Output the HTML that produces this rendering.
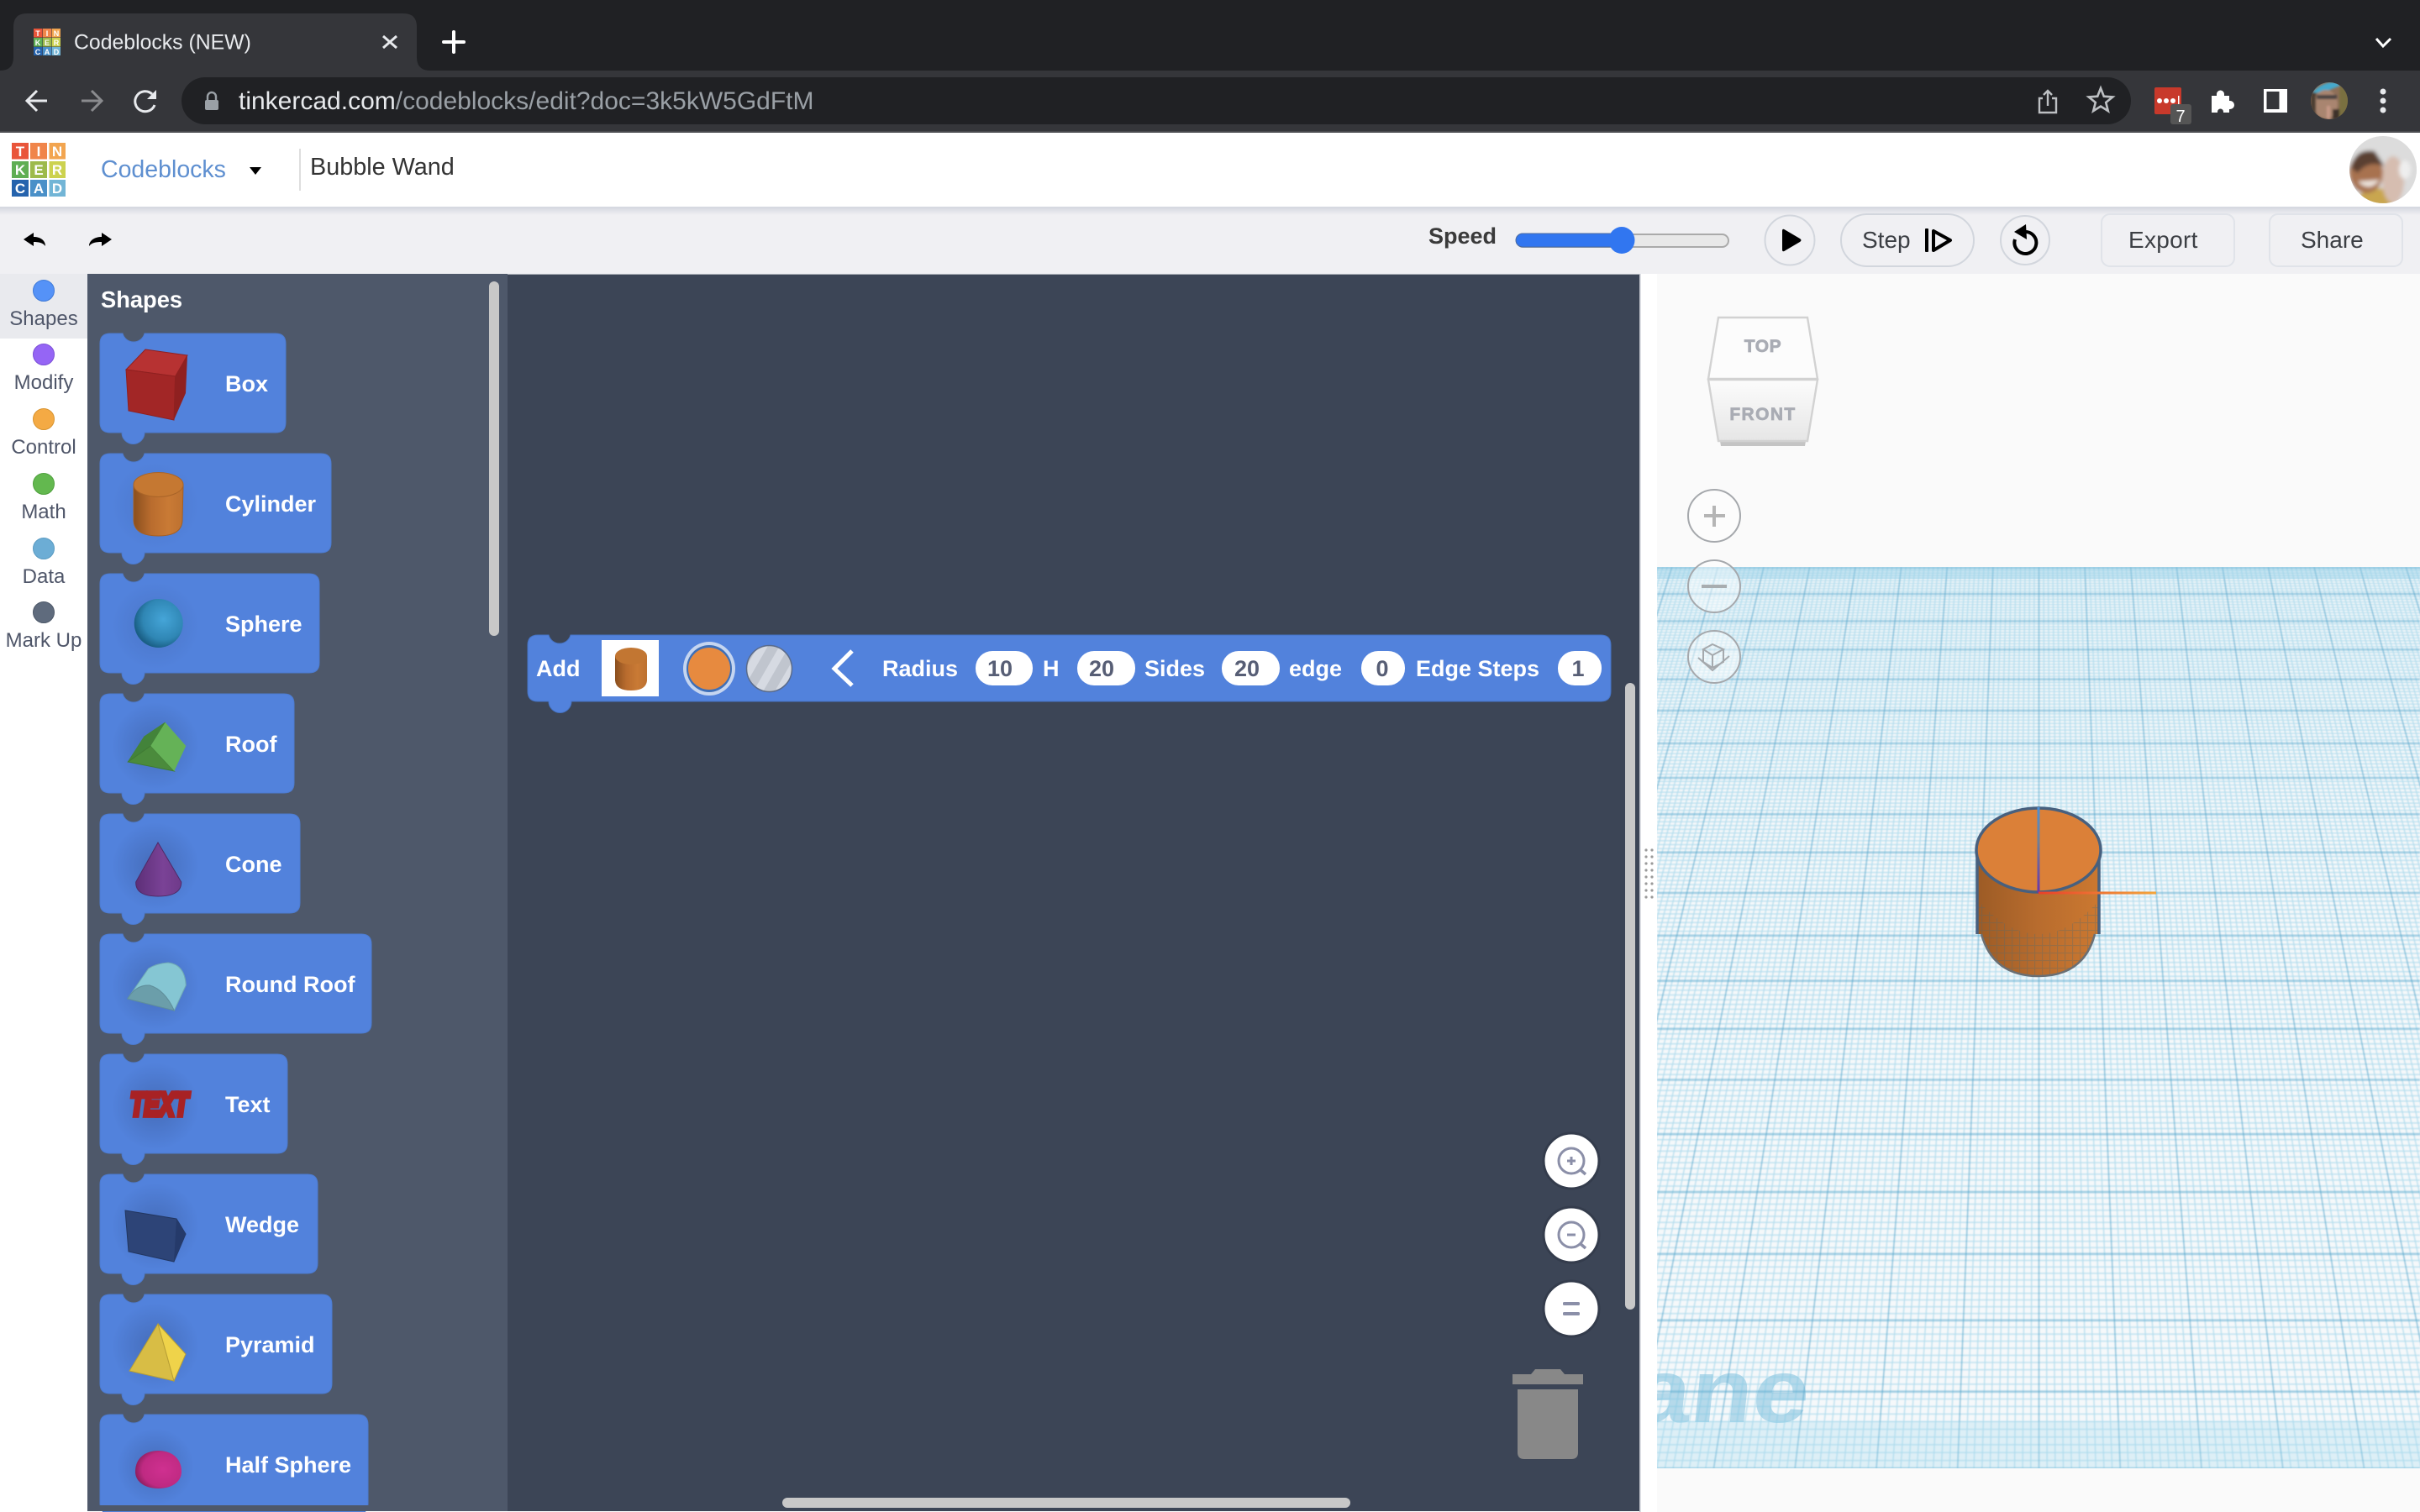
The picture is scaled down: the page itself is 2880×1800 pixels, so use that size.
<!DOCTYPE html>
<html><head><meta charset="utf-8"><title>Codeblocks (NEW)</title>
<style>
html,body{margin:0;padding:0;width:2880px;height:1800px;overflow:hidden;background:#fff}
svg{display:block;position:absolute;left:0;top:0}
text{font-family:"Liberation Sans",sans-serif}
.b{font-weight:bold;font-size:27px;fill:#fff}
.side{font-size:24px;fill:#4f5669;text-anchor:middle}
.n{font-weight:bold;font-size:27px;fill:#575e75;text-anchor:middle}
.lg{font-weight:bold;font-size:17px;fill:#fff;text-anchor:middle}
.fv{font-weight:bold;font-size:9px;fill:#fff;text-anchor:middle}
.tb{font-size:28px;fill:#3c3f44}
</style></head><body>
<svg width="2880" height="1800" viewBox="0 0 2880 1800" xmlns="http://www.w3.org/2000/svg">
<defs>
<linearGradient id="hs" x1="0" y1="0" x2="0" y2="1"><stop offset="0" stop-color="#d3d6df"/><stop offset="1" stop-color="#f0f0f3"/></linearGradient>
<linearGradient id="cyl" x1="0" y1="0" x2="1" y2="0"><stop offset="0" stop-color="#8a4f1e"/><stop offset=".35" stop-color="#b96c2e"/><stop offset=".7" stop-color="#c97a35"/><stop offset="1" stop-color="#bd7130"/></linearGradient>
<linearGradient id="body" x1="0" y1="0" x2="1" y2="0"><stop offset="0" stop-color="#9c5b25"/><stop offset=".5" stop-color="#b86c2e"/><stop offset="1" stop-color="#cb7830"/></linearGradient>
<radialGradient id="sph" cx=".6" cy=".42" r=".6"><stop offset="0" stop-color="#45a5d8"/><stop offset=".7" stop-color="#2f86b4"/><stop offset="1" stop-color="#1a5f85"/></radialGradient>
<radialGradient id="hsp" cx=".6" cy=".5" r=".6"><stop offset="0" stop-color="#cf3090"/><stop offset=".75" stop-color="#bf2a82"/><stop offset="1" stop-color="#8e1f60"/></radialGradient>
<linearGradient id="con" x1="0" y1="0" x2="1" y2="0"><stop offset="0" stop-color="#5d2f78"/><stop offset=".6" stop-color="#7a4296"/><stop offset="1" stop-color="#6f3a8a"/></linearGradient>
<radialGradient id="glow"><stop offset="0" stop-color="#3a5a9c" stop-opacity=".55"/><stop offset="1" stop-color="#3a5a9c" stop-opacity="0"/></radialGradient>
<linearGradient id="fr" x1="0" y1="0" x2="0" y2="1"><stop offset="0" stop-color="#fcfcfc"/><stop offset="1" stop-color="#e6e6e6"/></linearGradient>
<linearGradient id="ax" x1="0" y1="0" x2="0" y2="1"><stop offset="0" stop-color="#4a90d8"/><stop offset=".4" stop-color="#6f7f96"/><stop offset="1" stop-color="#6a35a8"/></linearGradient>
<linearGradient id="ax2" x1="0" y1="0" x2="1" y2="0"><stop offset="0" stop-color="#e8402a"/><stop offset="1" stop-color="#f4a63c"/></linearGradient>
<pattern id="st" width="22" height="22" patternUnits="userSpaceOnUse" patternTransform="rotate(30)"><rect width="22" height="22" fill="#c0c5ce"/><rect width="10" height="22" fill="#d6dae2"/></pattern>
<pattern id="gt" width="9" height="9" patternUnits="userSpaceOnUse"><path d="M0 .5H9M.5 0V9" stroke="#4d6a70" stroke-opacity=".32" stroke-width="1.2" fill="none"/></pattern>
<clipPath id="gc"><rect x="1972" y="675" width="908" height="1073"/></clipPath>
<clipPath id="av1"><ellipse cx="2772" cy="120" rx="22" ry="22"/></clipPath>
<clipPath id="av2"><ellipse cx="2836" cy="202" rx="40" ry="40"/></clipPath>
<filter id="bl"><feGaussianBlur stdDeviation="2.5"/></filter>
<filter id="bs"><feGaussianBlur stdDeviation="1.2"/></filter>
<filter id="gb"><feGaussianBlur stdDeviation=".7"/></filter>
<filter id="sb"><feGaussianBlur stdDeviation=".5"/></filter>
</defs>

<!-- browser chrome -->
<rect width="2880" height="84" fill="#202124"/>
<rect y="84" width="2880" height="72" fill="#35363a"/>
<rect y="156" width="2880" height="2" fill="#4a4b4f"/>
<path d="M0 84Q16 84 16 68V32Q16 16 32 16H480Q496 16 496 32V68Q496 84 512 84Z" fill="#35363a"/>
<g>
<rect x="40" y="34" width="10.5" height="10.5" fill="#e9553a"/><rect x="51" y="34" width="10.5" height="10.5" fill="#f0854a"/><rect x="62" y="34" width="10" height="10.5" fill="#f2a550"/>
<rect x="40" y="45" width="10.5" height="10.5" fill="#5fae54"/><rect x="51" y="45" width="10.5" height="10.5" fill="#9dba4b"/><rect x="62" y="45" width="10" height="10.5" fill="#ccd24f"/>
<rect x="40" y="56" width="10.5" height="10" fill="#2563ad"/><rect x="51" y="56" width="10.5" height="10" fill="#4a90c8"/><rect x="62" y="56" width="10" height="10" fill="#72b5d6"/>
<text class="fv" x="45" y="43">T</text><text class="fv" x="56" y="43">I</text><text class="fv" x="67" y="43">N</text>
<text class="fv" x="45" y="54">K</text><text class="fv" x="56" y="54">E</text><text class="fv" x="67" y="54">R</text>
<text class="fv" x="45" y="65">C</text><text class="fv" x="56" y="65">A</text><text class="fv" x="67" y="65">D</text>
</g>
<text x="88" y="58.5" font-size="24.8" fill="#e8eaed">Codeblocks (NEW)</text>
<path d="M456 43L472 57M472 43L456 57" stroke="#e8eaed" stroke-width="3" fill="none"/>
<path d="M540 38V62M528 50H552" stroke="#fff" stroke-width="4" fill="none" stroke-linecap="round"/>
<path d="M2828 46L2836 55L2845 46" stroke="#fff" stroke-width="3" fill="none"/>
<path d="M56 120H33M44 108L32 120L44 132" stroke="#e8eaed" stroke-width="3" fill="none"/>
<path d="M120 120H97M109 108L121 120L109 132" stroke="#8a8b8e" stroke-width="3" fill="none"/>
<path d="M184 125A12 12 0 1 1 181 112" stroke="#e8eaed" stroke-width="3" fill="none"/><path d="M186 107V118H175Z" fill="#e8eaed"/>
<rect x="216" y="92" width="2320" height="56" rx="28" fill="#202124"/>
<rect x="244" y="119" width="16" height="12" rx="2" fill="#9aa0a6"/><path d="M247 119V115A5 5 0 0 1 257 115V119" stroke="#9aa0a6" stroke-width="2.4" fill="none"/>
<text x="284" y="130" font-size="30" fill="#e8eaed">tinkercad.com<tspan fill="#9aa0a6">/codeblocks/edit?doc=3k5kW5GdFtM</tspan></text>
<path d="M2431 117H2427V134H2447V117H2442M2437 126V108M2432 113L2437 108L2442 113" stroke="#bdc0c3" stroke-width="2.4" fill="none"/>
<path d="M2500 105L2503.8 114.7L2514.3 115.4L2506.2 122L2508.8 132.1L2500 126.5L2491.2 132.1L2493.8 122L2485.7 115.4L2496.2 114.7Z" stroke="#bdc0c3" stroke-width="2.6" fill="none"/>
<rect x="2564" y="104" width="32" height="32" rx="2" fill="#c8392b"/>
<circle cx="2570" cy="120" r="3" fill="#fff"/><circle cx="2578" cy="120" r="3" fill="#fff"/><circle cx="2586" cy="120" r="3" fill="#fff"/><rect x="2592" y="114" width="1.5" height="12" fill="#fff"/>
<rect x="2583" y="124" width="25" height="24" rx="3" fill="#555"/><text x="2595" y="145" font-size="20" fill="#fff" text-anchor="middle">7</text>
<path transform="translate(-2,0)" d="M2634 114h6v-2a4.5 4.5 0 0 1 9 0v2h6v6h1a5 5 0 0 1 0 10h-1v4h-7v-1a3.5 3.5 0 0 0 -7 0v1h-7Z" fill="#fff"/>
<rect x="2694" y="106" width="28" height="28" fill="#fff"/><rect x="2697.5" y="109" width="15" height="21" fill="#35363a"/>
<g clip-path="url(#av1)"><rect x="2750" y="98" width="44" height="44" fill="#8e6f58"/><g filter="url(#bs)"><path d="M2750 112Q2768 92 2790 100L2770 108Z" fill="#45a9cc"/><rect x="2784" y="100" width="12" height="44" fill="#7a7040"/><ellipse cx="2768" cy="124" rx="14" ry="17" fill="#a98570"/><rect x="2757" y="113" width="24" height="5" fill="#4a4242"/><rect x="2750" y="110" width="6" height="32" fill="#4c3c32"/><rect x="2769" y="126" width="4" height="16" fill="#c89a88"/><rect x="2776" y="130" width="8" height="12" fill="#3c302a"/></g></g>
<circle cx="2836" cy="109" r="3.5" fill="#e8eaed"/><circle cx="2836" cy="120" r="3.5" fill="#e8eaed"/><circle cx="2836" cy="131" r="3.5" fill="#e8eaed"/>

<!-- app header -->
<rect y="158" width="2880" height="88" fill="#fff"/>
<g>
<rect x="14" y="170" width="20" height="19.5" fill="#e9553a"/><rect x="36" y="170" width="20" height="19.5" fill="#f0854a"/><rect x="58.5" y="170" width="19.5" height="19.5" fill="#f2a550"/>
<rect x="14" y="192" width="20" height="20" fill="#5fae54"/><rect x="36" y="192" width="20" height="20" fill="#9dba4b"/><rect x="58.5" y="192" width="19.5" height="20" fill="#ccd24f"/>
<rect x="14" y="214" width="20" height="20" fill="#2563ad"/><rect x="36" y="214" width="20" height="20" fill="#4a90c8"/><rect x="58.5" y="214" width="19.5" height="20" fill="#72b5d6"/>
<text class="lg" x="24" y="186">T</text><text class="lg" x="46" y="186">I</text><text class="lg" x="68" y="186">N</text>
<text class="lg" x="24" y="208">K</text><text class="lg" x="46" y="208">E</text><text class="lg" x="68" y="208">R</text>
<text class="lg" x="24" y="230">C</text><text class="lg" x="46" y="230">A</text><text class="lg" x="68" y="230">D</text>
</g>
<text x="120" y="211" font-size="28.5" fill="#5e8fd0">Codeblocks</text>
<path d="M297 199H311L304 208Z" fill="#000"/>
<rect x="356" y="177" width="2" height="50" fill="#dedede"/>
<text x="369" y="208" font-size="28.8" fill="#333">Bubble Wand</text>
<ellipse cx="2836" cy="202" rx="40" ry="40" fill="#dcdcdc"/>
<g clip-path="url(#av2)"><g filter="url(#bl)"><rect x="2796" y="162" width="80" height="80" fill="#dcdcdc"/><path d="M2800 242Q2815 218 2842 226L2850 245H2800Z" fill="#c9a650"/><ellipse cx="2816" cy="206" rx="20" ry="24" fill="#a8724f"/><path d="M2798 200Q2803 176 2826 180L2838 198Q2818 190 2806 206Z" fill="#5a4030"/><path d="M2806 216Q2820 230 2832 214" fill="#ece2da"/><ellipse cx="2848" cy="214" rx="13" ry="28" fill="#d6bdb0"/><ellipse cx="2862" cy="202" rx="7" ry="11" fill="#eee"/></g></g>

<!-- toolbar -->
<rect y="246" width="2880" height="80" fill="#f0f0f3"/>
<rect y="246" width="2880" height="10" fill="url(#hs)"/>
<path d="M28 285L40 277V282C48 282 54 286 54 293C51 289 46 288 40 288V293Z" fill="#000"/>
<path d="M133 285L121 277V282C113 282 106 286 106 293C109 289 114 288 121 288V293Z" fill="#000"/>
<text x="1700" y="290" font-size="27" font-weight="bold" fill="#3a3a3a">Speed</text>
<rect x="1805" y="279" width="252" height="15" rx="7.5" fill="#e8e8e8" stroke="#aaa" stroke-width="2"/>
<rect x="1804" y="278" width="127" height="16" rx="8" fill="#3176f0" stroke="#4a6a9f" stroke-width="1"/>
<ellipse cx="1930" cy="286" rx="15.5" ry="16" fill="#3176f0"/>
<circle cx="2130" cy="286" r="29.5" fill="none" stroke="#d2d6dd" stroke-width="2"/>
<path d="M2121 275Q2121 271 2125 274L2142 284Q2145 286 2142 288L2125 298Q2121 301 2121 297Z" fill="#000"/>
<rect x="2191" y="255" width="158" height="62" rx="31" fill="none" stroke="#d2d6dd" stroke-width="2"/>
<text class="tb" x="2216" y="295">Step</text>
<rect x="2291" y="272" width="4" height="28" rx="1" fill="#000"/>
<path d="M2301 275V298L2321 286Z" fill="none" stroke="#000" stroke-width="4" stroke-linejoin="round"/>
<circle cx="2410" cy="286" r="29" fill="none" stroke="#d2d6dd" stroke-width="2"/>
<path d="M2411 276A13 13 0 1 1 2398 285" fill="none" stroke="#000" stroke-width="4"/>
<path d="M2411 267L2397 276L2412 285Z" fill="#000"/>
<rect x="2501" y="255" width="158" height="62" rx="10" fill="none" stroke="#e0e3e9" stroke-width="2"/>
<text class="tb" x="2533" y="295" letter-spacing=".3">Export</text>
<rect x="2701" y="255" width="158" height="62" rx="10" fill="none" stroke="#e0e3e9" stroke-width="2"/>
<text class="tb" x="2738" y="295">Share</text>

<!-- sidebar -->
<rect y="326" width="104" height="1474" fill="#fff"/>
<rect y="326" width="104" height="77" fill="#e9eaee"/>
<g stroke-width="1">
<circle cx="52" cy="346" r="12.5" fill="#5592f7" stroke="#3f7ad8"/>
<circle cx="52" cy="422" r="12.5" fill="#9565f5" stroke="#7b4fd6"/>
<circle cx="52" cy="499" r="12.5" fill="#f4aa44" stroke="#d89430"/>
<circle cx="52" cy="576" r="12.5" fill="#63b84f" stroke="#4fa03d"/>
<circle cx="52" cy="653" r="12.5" fill="#6cadd5" stroke="#5a9bc2"/>
<circle cx="52" cy="729" r="12.5" fill="#5f6b7d" stroke="#4c5768"/>
</g>
<text class="side" x="52" y="387">Shapes</text>
<text class="side" x="52" y="463">Modify</text>
<text class="side" x="52" y="540">Control</text>
<text class="side" x="52" y="617">Math</text>
<text class="side" x="52" y="694">Data</text>
<text class="side" x="52" y="770">Mark Up</text>

<!-- drawer -->
<rect x="104" y="326" width="500" height="1473" fill="#4e586a"/>
<text x="120" y="366" font-size="27.3" font-weight="bold" fill="#fff">Shapes</text>
<rect x="582" y="335" width="12" height="422" rx="6" fill="#c8c8c8"/>

<g fill="#5282dc" stroke="#4c7bd0" stroke-width="1">
<path transform="translate(0,397)" d="M131 0H146A13.45 13.45 0 0 0 172 0H328Q340 0 340 12V106Q340 118 328 118H172A13.45 13.45 0 0 1 145 118H131Q119 118 119 106V12Q119 0 131 0Z"/>
<path transform="translate(0,540)" d="M131 0H146A13.45 13.45 0 0 0 172 0H382Q394 0 394 12V106Q394 118 382 118H172A13.45 13.45 0 0 1 145 118H131Q119 118 119 106V12Q119 0 131 0Z"/>
<path transform="translate(0,683)" d="M131 0H146A13.45 13.45 0 0 0 172 0H368Q380 0 380 12V106Q380 118 368 118H172A13.45 13.45 0 0 1 145 118H131Q119 118 119 106V12Q119 0 131 0Z"/>
<path transform="translate(0,826)" d="M131 0H146A13.45 13.45 0 0 0 172 0H338Q350 0 350 12V106Q350 118 338 118H172A13.45 13.45 0 0 1 145 118H131Q119 118 119 106V12Q119 0 131 0Z"/>
<path transform="translate(0,969)" d="M131 0H146A13.45 13.45 0 0 0 172 0H345Q357 0 357 12V106Q357 118 345 118H172A13.45 13.45 0 0 1 145 118H131Q119 118 119 106V12Q119 0 131 0Z"/>
<path transform="translate(0,1112)" d="M131 0H146A13.45 13.45 0 0 0 172 0H430Q442 0 442 12V106Q442 118 430 118H172A13.45 13.45 0 0 1 145 118H131Q119 118 119 106V12Q119 0 131 0Z"/>
<path transform="translate(0,1255)" d="M131 0H146A13.45 13.45 0 0 0 172 0H330Q342 0 342 12V106Q342 118 330 118H172A13.45 13.45 0 0 1 145 118H131Q119 118 119 106V12Q119 0 131 0Z"/>
<path transform="translate(0,1398)" d="M131 0H146A13.45 13.45 0 0 0 172 0H366Q378 0 378 12V106Q378 118 366 118H172A13.45 13.45 0 0 1 145 118H131Q119 118 119 106V12Q119 0 131 0Z"/>
<path transform="translate(0,1541)" d="M131 0H146A13.45 13.45 0 0 0 172 0H383Q395 0 395 12V106Q395 118 383 118H172A13.45 13.45 0 0 1 145 118H131Q119 118 119 106V12Q119 0 131 0Z"/>
<path transform="translate(0,1684)" d="M131 0H146A13.45 13.45 0 0 0 172 0H426Q438 0 438 12V106Q438 118 426 118H172A13.45 13.45 0 0 1 145 118H131Q119 118 119 106V12Q119 0 131 0Z"/>
</g>
<rect x="104" y="1792" width="500" height="7" fill="#4e586a"/>
<g>
<circle cx="185" cy="602" r="52" fill="url(#glow)" opacity=".5"/><circle cx="185" cy="745" r="52" fill="url(#glow)" opacity=".6"/>
<circle cx="185" cy="888" r="52" fill="url(#glow)"/><circle cx="185" cy="1031" r="52" fill="url(#glow)"/><circle cx="185" cy="1174" r="52" fill="url(#glow)"/><circle cx="185" cy="1317" r="52" fill="url(#glow)"/><circle cx="185" cy="1460" r="52" fill="url(#glow)"/><circle cx="185" cy="1603" r="52" fill="url(#glow)"/><circle cx="185" cy="1746" r="46" fill="url(#glow)"/>
</g>
<g class="labels">
<text class="b" x="268" y="466">Box</text>
<text class="b" x="268" y="609">Cylinder</text>
<text class="b" x="268" y="752">Sphere</text>
<text class="b" x="268" y="895">Roof</text>
<text class="b" x="268" y="1038">Cone</text>
<text class="b" x="268" y="1181">Round Roof</text>
<text class="b" x="268" y="1324">Text</text>
<text class="b" x="268" y="1467">Wedge</text>
<text class="b" x="268" y="1610">Pyramid</text>
<text class="b" x="268" y="1753">Half Sphere</text>
</g>
<!-- shape icons -->
<path d="M173 416L223 423L208.6 448L150 440Z" fill="#b73232" stroke="#8f2020"/>
<path d="M150 440L208.6 448L207 500L153 489Z" fill="#a22626" stroke="#8f2020"/>
<path d="M223 423L208.6 448L207 500L221 468Z" fill="#8f2020"/>
<path d="M159 577V620Q160 638 188.5 638Q216 638 217 620L218 577Z" fill="url(#cyl)" stroke="#a35f25"/>
<ellipse cx="188.5" cy="577" rx="29.5" ry="14.5" fill="#c57832" stroke="#a96428"/>
<ellipse cx="188.7" cy="742" rx="29" ry="29" fill="url(#sph)"/>
<path d="M152.3 907L171.7 877L196.7 860L179.3 888Z" fill="#43833a" stroke="#43833a"/>
<path d="M152.3 907L179.3 888L207.3 918Z" fill="#4b8b3c" stroke="#3f7a33"/>
<path d="M196.7 860L221.3 888L207.3 918L179.3 888Z" fill="#65b257"/>
<path d="M188 1003L215.7 1050Q216 1067 188 1067Q161 1067 161.7 1050Z" fill="url(#con)" stroke="#4e2a66"/>
<path d="M151.7 1189L176.7 1153Q186 1147 200 1146Q220 1148 221.3 1173L207.3 1203Q196 1180 178 1173Q162 1172 151.7 1189Z" fill="#85c6d3" stroke="#6fa8b4"/>
<path d="M151.7 1189Q162 1172 178 1173Q196 1178 207.3 1203Z" fill="#6b9eaa" stroke="#5f8e9a"/>
<text font-size="27" font-weight="bold" font-style="italic" fill="#c7352d" stroke="#a82224" stroke-width="4" transform="translate(155,1328) scale(1,1.45)">TEXT</text>
<path d="M149 1441L210 1451L221 1469L207 1502L153 1490Z" fill="#2d4477" stroke="#223660"/>
<path d="M210 1451L221 1469L207 1502Z" fill="#253a6a"/>
<path d="M188 1576L154 1632L207 1644Z" fill="#d8bd45" stroke="#b89f35"/>
<path d="M188 1576L221 1612L207 1644Z" fill="#efd34a" stroke="#b89f35"/>
<path d="M161 1752C161 1735 174 1727 188.5 1727C203 1727 216 1735 216 1752C216 1765 203 1772 188.5 1772C174 1772 161 1765 161 1752Z" fill="url(#hsp)"/>

<!-- workspace -->
<rect x="604" y="326" width="1348" height="1473" fill="#3c4556"/>
<rect x="604" y="326" width="1348" height="1" fill="#aeb2ba"/>
<rect x="1951" y="326" width="1.5" height="1474" fill="#c0c4cc"/>
<path d="M640 756H653A13.45 13.45 0 0 0 679 756H1905Q1917 756 1917 768V823Q1917 835 1905 835H680A13.45 13.45 0 0 1 653 835H640Q628 835 628 823V768Q628 756 640 756Z" fill="#5282dc" stroke="#4573c4" stroke-width="1"/>
<text class="b" x="638" y="805">Add</text>
<rect x="716" y="762" width="68" height="67" fill="#fff"/>
<path d="M732 781V810Q733 822 751 822Q769 822 770 810V781Z" fill="url(#cyl)"/>
<ellipse cx="751" cy="781" rx="19" ry="10" fill="#c27632"/>
<ellipse cx="844" cy="796" rx="31" ry="32" fill="#c5d5f0"/>
<ellipse cx="844" cy="796" rx="27" ry="28" fill="#3e6fb8"/>
<ellipse cx="844" cy="796" rx="25" ry="25" fill="#e78a3f"/>
<ellipse cx="915.5" cy="796" rx="27" ry="27.5" fill="url(#st)" stroke="#5a6b8a" stroke-width="1.5"/>
<path d="M1014 775L993 796L1014 816" stroke="#fff" stroke-width="5" fill="none"/>
<text class="b" x="1050" y="805">Radius</text>
<rect x="1161" y="775" width="68" height="41" rx="20" fill="#fff"/><text class="n" x="1190" y="805">10</text>
<text class="b" x="1241" y="805">H</text>
<rect x="1282" y="775" width="69" height="41" rx="20" fill="#fff"/><text class="n" x="1311" y="805">20</text>
<text class="b" x="1362" y="805">Sides</text>
<rect x="1454" y="775" width="69" height="41" rx="20" fill="#fff"/><text class="n" x="1484" y="805">20</text>
<text class="b" x="1534" y="805">edge</text>
<rect x="1620" y="775" width="52" height="41" rx="20" fill="#fff"/><text class="n" x="1645" y="805">0</text>
<text class="b" x="1685" y="805">Edge Steps</text>
<rect x="1854" y="775" width="52" height="41" rx="20" fill="#fff"/><text class="n" x="1878" y="805">1</text>

<rect x="1934" y="813" width="12" height="746" rx="6" fill="#c8c8c8"/>
<rect x="931" y="1783" width="676" height="12" rx="6" fill="#c8c8c8"/>

<g stroke="#343c4c" stroke-width="3" fill="#fff"><circle cx="1870" cy="1382" r="33"/><circle cx="1870" cy="1470" r="33"/><circle cx="1870" cy="1558" r="33"/></g>
<g stroke="#8b8fa8" stroke-width="3" fill="none">
<circle cx="1870" cy="1382" r="15"/><path d="M1880 1392L1887 1398" stroke-width="3.5"/><path d="M1865 1382H1875M1870 1377V1387"/>
<circle cx="1870" cy="1470" r="15"/><path d="M1880 1480L1887 1486" stroke-width="3.5"/><path d="M1865 1470H1875"/>
</g>
<rect x="1860" y="1550" width="20" height="4" rx="1.5" fill="#8b8fa8"/><rect x="1860" y="1562" width="20" height="4" rx="1.5" fill="#8b8fa8"/>
<path d="M1800 1636H1822L1827 1630H1857L1862 1636H1884V1648H1800Z" fill="#888"/>
<path d="M1806 1654H1878V1729Q1878 1737 1870 1737H1814Q1806 1737 1806 1729Z" fill="#888"/>

<!-- viewer -->
<rect x="1952.5" y="326" width="19.5" height="1474" fill="#fff"/>
<rect x="1972" y="326" width="908" height="1474" fill="#fafafa"/>
<g fill="#9a9a9a" id="dots">
<circle cx="1959" cy="1012" r="1.6"/><circle cx="1959" cy="1020" r="1.6"/><circle cx="1959" cy="1028" r="1.6"/><circle cx="1959" cy="1036" r="1.6"/><circle cx="1959" cy="1044" r="1.6"/><circle cx="1959" cy="1052" r="1.6"/><circle cx="1959" cy="1060" r="1.6"/><circle cx="1959" cy="1068" r="1.6"/>
<circle cx="1966" cy="1012" r="1.6"/><circle cx="1966" cy="1020" r="1.6"/><circle cx="1966" cy="1028" r="1.6"/><circle cx="1966" cy="1036" r="1.6"/><circle cx="1966" cy="1044" r="1.6"/><circle cx="1966" cy="1052" r="1.6"/><circle cx="1966" cy="1060" r="1.6"/><circle cx="1966" cy="1068" r="1.6"/>
</g>
<g clip-path="url(#gc)">
<rect x="1972" y="675" width="908" height="1073" fill="#f5f8fa"/>
<text font-size="108" font-weight="bold" fill="#8cc6e0" opacity=".6" text-anchor="end" transform="translate(2150,1693) skewX(-6) scale(1.12,1)">ane</text>
<g id="grid" filter="url(#gb)"></g>
<rect x="1972" y="675" width="908" height="14" fill="#8ccbe6" opacity=".35"/>
<rect x="1972" y="1692" width="908" height="56" fill="#a4daee" opacity=".3"/>
</g>

<!-- viewcube -->
<path d="M2045 378H2151L2163 451H2033Z" fill="#fcfcfc" stroke="#d2d2d2" stroke-width="2.4"/>
<path d="M2047 525H2149L2148 531H2048Z" fill="#c4c4c4"/>
<path d="M2033 452H2163L2151 525H2045Z" fill="url(#fr)" stroke="#d2d2d2" stroke-width="2.4"/>
<text x="2098" y="419" font-size="21" font-weight="bold" fill="#a9acb4" stroke="#a9acb4" stroke-width=".7" text-anchor="middle" letter-spacing=".6">TOP</text>
<text x="2098" y="500" font-size="21" font-weight="bold" fill="#a9acb4" stroke="#a9acb4" stroke-width=".7" text-anchor="middle" letter-spacing="1.4">FRONT</text>
<g fill="#fff" fill-opacity=".45" stroke="#a5a8ac" stroke-width="2">
<circle cx="2040" cy="614" r="31"/><circle cx="2040" cy="698" r="31"/><circle cx="2040" cy="782" r="31"/>
</g>
<path d="M2028 614H2053M2040 602V627" stroke="#b5b5b5" stroke-width="4" fill="none"/>
<path d="M2025 698H2055" stroke="#a8adb0" stroke-width="4" fill="none"/>
<path d="M2038 767L2051 773L2038 780L2027 773ZM2027 773V788L2038 795L2051 788V773M2038 780V795M2021 783L2038 798L2058 781" stroke="#a5a9ad" stroke-width="2" fill="none"/>

<!-- 3D cylinder -->
<path d="M2352 1012V1112L2358 1112Q2372 1162 2426 1162Q2480 1162 2493 1112L2499 1112V1012Z" fill="url(#body)"/>
<path d="M2355 1073Q2390 1112 2426 1112Q2462 1112 2497 1073V1112H2493Q2480 1162 2426 1162Q2372 1162 2358 1112H2354Z" fill="url(#gt)"/>
<path d="M2358 1112Q2372 1162 2426 1162Q2480 1162 2493 1112" fill="none" stroke="#6a6f74" stroke-width="2.5"/>
<path d="M2353 1012V1112M2498 1012V1112" stroke="#48607e" stroke-width="3.5" fill="none"/>
<ellipse cx="2426" cy="1012" rx="74" ry="50" fill="#db8038" stroke="#48607e" stroke-width="3.5"/>
<rect x="2424.5" y="961" width="3" height="102" fill="url(#ax)"/>
<rect x="2426" y="1061.5" width="140" height="3" fill="url(#ax2)"/>

</svg>
<script>
(function(){
var g=document.getElementById('grid'),cx=2426.5,T=675,B=1748;
function s(y){return 0.0393*(y+714);}
function Y(k){return -714+1/(7.037e-4-0.1566e-4*k);}
var mn='',mjh='',mjv='',k,x1,x2,y;
for(k=-10;k<=190;k++){y=Y(k/10).toFixed(1);
 if(k%10===0){mjh+='M1972 '+y+'H2880';}else{mn+='M1972 '+y+'H2880';}}
for(k=-95;k<=95;k++){x1=(cx+k/10*s(T)).toFixed(1);x2=(cx+k/10*s(B)).toFixed(1);
 var d='M'+x1+' '+T+'L'+x2+' '+B;
 if(k%10===0){mjv+=d;}else{mn+=d;}}
function add(d,c,w){var p=document.createElementNS('http://www.w3.org/2000/svg','path');
 p.setAttribute('d',d);p.setAttribute('stroke',c);p.setAttribute('stroke-width',w);p.setAttribute('fill','none');g.appendChild(p);}
add(mn,'rgba(125,198,228,.55)','1.25');
add(mjh,'rgba(105,178,212,.6)','2.6');
add(mjv,'rgba(88,168,205,.7)','1.4');
})();
</script>
</body></html>
